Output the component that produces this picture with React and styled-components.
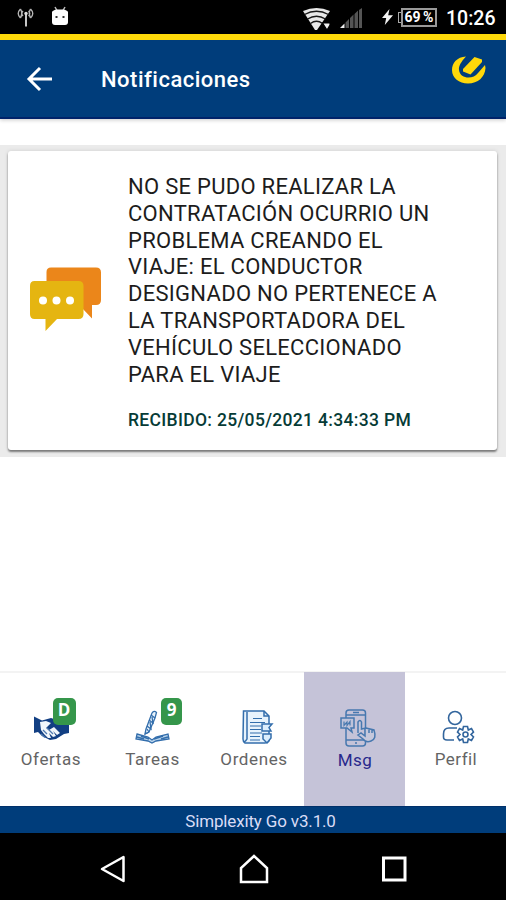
import React from "react";
import styled, { createGlobalStyle } from "styled-components";

const GlobalStyle = createGlobalStyle`
  *, *::before, *::after { box-sizing: border-box; }
  body { margin: 0; background: #fff; font-family: Roboto, "Liberation Sans", sans-serif; }
  svg { display: block; flex: none; overflow: visible; }
`;

const Screen = styled.div`
  display: flex;
  flex-direction: column;
  width: 506px;
  height: 900px;
  overflow: hidden;
  background: #fff;
`;

const StatusBar = styled.header`
  display: flex;
  justify-content: space-between;
  height: 34px;
  padding: 0 11px 0 17px;
  background: #000;
  color: #fff;
`;

const StatusGroup = styled.div`
  display: flex;
  align-items: flex-start;
`;

const StatusIcon = styled.svg`
  margin: ${(p) => p.$top}px ${(p) => p.$right}px 0 0;
`;

const Battery = styled.div`
  display: flex;
  align-items: center;
  margin: 8px 9px 0 0;
`;

const BatteryTip = styled.span`
  width: 3px;
  height: 11px;
  border: 1.5px solid #aaa;
  border-right: 0;
`;

const BatteryLevel = styled.span`
  width: 36px;
  height: 19px;
  border: 2px solid #999;
  font-size: 14px;
  font-weight: 700;
  line-height: 15px;
  text-align: center;
  white-space: nowrap;
  word-spacing: -1px;
`;

const Clock = styled.span`
  width: 49px;
  padding-top: 7px;
  font-size: 19.5px;
  font-weight: 500;
  line-height: 23px;
  white-space: nowrap;
`;

const AppBar = styled.div`
  display: flex;
  align-items: center;
  height: 85px;
  padding: 0 20px 0 26px;
  border-top: 6px solid #ffd90a;
  border-bottom: 2px solid #00236a;
  background: #003d7b;
  box-shadow: 0 1px 4px rgba(0, 0, 0, 0.22);
`;

const Title = styled.h1`
  flex: 1;
  margin: 2px 0 0 48px;
  color: #fff;
  font-size: 22px;
  font-weight: 500;
  letter-spacing: 0.5px;
  line-height: 28px;
`;

const BrandMark = styled.svg`
  align-self: flex-start;
  margin-top: 16px;
`;

const Feed = styled.main`
  margin-top: 26px;
  padding: 6px 9px 7px 8px;
  background: #ebebeb;
`;

const Card = styled.article`
  display: flex;
  height: 299px;
  padding: 23px 0 0 21px;
  border-radius: 3px;
  background: #fff;
  box-shadow: 0 2px 2px rgba(0, 0, 0, 0.45), 0 0 4px rgba(0, 0, 0, 0.12);
`;

const BubbleIcon = styled.svg`
  margin-top: 92px;
`;

const Message = styled.div`
  margin-left: 27px;
`;

const MessageText = styled.p`
  margin: 0;
  color: #1c1c1c;
  font-size: 22px;
  font-weight: 400;
  letter-spacing: 0.28px;
  line-height: 26.8px;
  white-space: nowrap;
`;

const Received = styled.p`
  margin: 21px 0 0;
  color: #063b36;
  font-size: 17.5px;
  font-weight: 500;
  letter-spacing: 0.32px;
  line-height: 22px;
  white-space: nowrap;
`;

const TabBar = styled.nav`
  display: grid;
  grid-template-columns: 101fr 102fr 101fr 101fr 101fr;
  height: 135px;
  margin-top: auto;
  border-top: 2px solid #f3f3f3;
`;

const Tab = styled.a`
  display: flex;
  flex-direction: column;
  align-items: center;
  padding-top: ${(p) => (p.$active ? 36 : 35)}px;
  margin-top: -1px;
  background: ${(p) => (p.$active ? "#c5c3d8" : "transparent")};
  color: ${(p) => (p.$active ? "#28288c" : "#646464")};
`;

const IconHolder = styled.div`
  position: relative;
  width: 40px;
  height: 40px;
`;

const TabLabel = styled.span`
  margin: 1px 0 0 1px;
  font-size: 17px;
  font-weight: 400;
  letter-spacing: ${(p) => p.$spacing}px;
  line-height: 22px;
`;

const Badge = styled.span`
  position: absolute;
  top: -9px;
  left: ${(p) => p.$left}px;
  width: ${(p) => p.$width}px;
  height: 27px;
  border-radius: 5px;
  background: #35964b;
  color: #fff;
  font: 700 17px/24px "Open Sans", "Noto Sans", sans-serif;
  text-align: center;
`;

const Version = styled.footer`
  height: 27px;
  padding-left: 15px;
  border-top: 1px solid #00306a;
  background: #003d7b;
  color: #d9dcf6;
  font-size: 17px;
  letter-spacing: -0.15px;
  line-height: 29px;
  text-align: center;
`;

const SystemBar = styled.div`
  display: flex;
  justify-content: space-between;
  align-items: center;
  height: 67px;
  padding: 4px 99px 0 99px;
  background: #000;
`;

const blue = "#336eac";

function Antenna() {
  return (
    <StatusIcon $top={8} $right={17} width="17" height="20" viewBox="0 0 17 20" fill="none" stroke="#b5b5b5" strokeWidth="1.4">
      <path d="M9 6V18.5" stroke="#ddd" strokeWidth="1.8" />
      <path d="M3.5 1Q-1 5.5 3.5 10M6 3Q3.5 5.5 6 8M13.5 1Q18 5.5 13.5 10M11.5 3Q14 5.5 11.5 8M3.5 1Q6 5 3.5 10M13.5 1Q11 5 13.5 10" />
      <circle cx="9" cy="5.5" r="1.7" fill="#ddd" stroke="none" />
    </StatusIcon>
  );
}

function Robot() {
  return (
    <StatusIcon $top={6} $right={0} width="18" height="20" viewBox="0 0 18 20">
      <path d="M4 1L6 4.5M14 1L12 4.5" stroke="#bbb" strokeWidth="1.5" />
      <path d="M1 6Q2 4 6 3.5H12Q16 4 17 6V16Q17 19 14 19H4Q1 19 1 16Z" fill="#fff" />
      <path d="M4.5 10h2v2h-2zM11.5 10h2v2h-2z" fill="#333" />
    </StatusIcon>
  );
}

function Wifi() {
  return (
    <StatusIcon $top={7} $right={9} width="29" height="24" viewBox="0 0 29 24" fill="none">
      <path d="M1 4Q14.5-2 28 4L15 23H13Z" fill="#e8e8e8" />
      <path d="M2.5 7.5Q14.5 1 26.5 7.5M5.5 12Q14.5 6.5 23.5 12M8.5 16.5Q14.5 12 20.5 16.5" stroke="#181818" strokeWidth="1.4" />
      <path d="M20.5 16H28V18L25 23Z" fill="#eee" stroke="#000" strokeWidth="1.2" />
    </StatusIcon>
  );
}

function Signal() {
  return (
    <StatusIcon $top={7} $right={19} width="23" height="22" viewBox="0 0 23 22">
      <path d="M0 21L4.5 16.5V21Z" fill="#eee" />
      <path d="M5.5 21V15.5L9 12V21ZM10 21V11L13.5 7.5V21ZM14.5 21V7L18 3.5V21ZM19 21V3L22 1V21Z" fill="#555" />
    </StatusIcon>
  );
}

function Bolt() {
  return (
    <StatusIcon $top={9} $right={5} width="11" height="16" viewBox="0 0 11 16">
      <path d="M7.5 0L0 9H4.2L2.8 16L11 6.2H6.2Z" fill="#f4f4f4" />
    </StatusIcon>
  );
}

function Bubbles() {
  return (
    <BubbleIcon width="72" height="68" viewBox="29 266 72 68">
      <path d="M51 267.5H96Q101 267.5 101 272.5V300Q101 305 96 305H92V318.5L82 308H51Q46.5 308 46.5 303V272Q46.5 267.5 51 267.5Z" fill="#eb861a" />
      <path d="M34.5 281H78.5Q83.5 281 83.5 286V314Q83.5 319 78.5 319H57L45.5 331V319H34.5Q30 319 30 314V286Q30 281 34.5 281Z" fill="#e5b511" />
      <circle cx="43" cy="300.5" r="4" fill="#fff" />
      <circle cx="56.5" cy="300.5" r="4" fill="#fff" />
      <circle cx="70" cy="300.5" r="4" fill="#fff" />
    </BubbleIcon>
  );
}

function Handshake() {
  return (
    <svg width="40" height="40" viewBox="31 706 40 40">
      <path d="M34 715.5L42 719.5L51 717L60 720L69 717V732L64 733L56 738L50 739L42 735L38 731L34 732Z" fill="#123f83" />
      <path d="M40 721L46 720L51 722L46 727L49 729L54 726L60 732L57 734L53 730L56 735L53 736L49 732L51 737L48 737L44 733L41 729Z" fill="#f2f7fb" />
      <path d="M43 729L47 733M47 727L53 733M41 733L45 736.5" stroke="#4f79ae" strokeWidth="1.3" fill="none" />
    </svg>
  );
}

function PenBook() {
  return (
    <svg width="40" height="40" viewBox="132 706 40 40" fill="none" stroke={blue} strokeWidth="1.3">
      <path d="M145 733L146 728L152 712Q154 709 156.5 711.5L155 717L149 731Z" fill="#e7f2fb" />
      <path d="M151 714L155 717M149 719L153 722L152 716M147 725L151 728L150 721M145 733L149 731M147 728L149 731" />
      <path d="M137 733L148 736L152 739L156 736L168 733L169 738L156 740L152 742L148 740L136 738Z" fill="#bcd6ed" />
      <path d="M141 735L149 738M163 735L154 738M137 736L144 738M168 736L161 738" strokeWidth="1.8" />
    </svg>
  );
}

function OrdersIcon() {
  return (
    <svg width="40" height="40" viewBox="234 707 40 40" fill="none" stroke={blue} strokeWidth="1.5">
      <path d="M243.5 711H264L269 716V741Q268 743 265 743H245Q243 742 243 739Z" fill="#e8f3fc" />
      <path d="M247 712V739Q246 741 244 742M264 711V716H269" />
      <path d="M253 718.5H262M250 722.5H265M250 726H261M250 729.5H261M250 733H262M250 736.5H260M250 740H260" strokeWidth="1.2" />
      <path d="M262 725V724H272L269 727.5L271 731H262ZM263 734H271V738L267 743L263 739Z" fill="#dceefd" />
    </svg>
  );
}

function MessageIcon() {
  return (
    <svg width="40" height="40" viewBox="335 707 40 40" fill="none" stroke="#4778af" strokeWidth="1.5">
      <rect x="346" y="709" width="19.5" height="36" rx="3" />
      <path d="M346 714H365M346 739H365M353 711.5H359M355 742H357" />
      <path d="M341 717H354V727H351L352 731L347 727H341Z" fill="#bfc3da" />
      <path d="M344 720.5V724.5L347 721V724.5L350 720.5V724.5" strokeWidth="1.2" />
      <path d="M358 732V721Q360 718 361.5 721V728L366 727L374 729Q377 738 371 740Q366 742 363 738L358 734L361 732L365 735V728M369 728V732M372 729V732" fill="#c5c8dc" />
    </svg>
  );
}

function ProfileIcon() {
  return (
    <svg width="40" height="40" viewBox="436 707 40 40" fill="none" stroke="#32659d" strokeWidth="1.6">
      <circle cx="455" cy="718" r="6.5" />
      <path d="M457 728H449Q443.5 728 443.5 734V737Q443.5 740 447 740H454" />
      <path d="M463.5 726.5H467.5L468.3 730L471.5 728.5L473.5 732L471 734.5L473.5 737L471.5 740.5L468.3 739L467.5 742.5H463.5L462.7 739L459.5 740.5L457.5 737L460 734.5L457.5 732L459.5 728.5L462.7 730Z" />
      <circle cx="465.5" cy="734.5" r="2.5" />
    </svg>
  );
}

const tabs = [
  { label: "Ofertas", Icon: Handshake, spacing: 0.6, badge: { text: "D", left: 22, width: 23 } },
  { label: "Tareas", Icon: PenBook, spacing: 0.6, badge: { text: "9", left: 29, width: 21 } },
  { label: "Ordenes", Icon: OrdersIcon, spacing: 0.6 },
  { label: "Msg", Icon: MessageIcon, spacing: 0.5, active: true },
  { label: "Perfil", Icon: ProfileIcon, spacing: 0.45 },
];

const messageLines = [
  "NO SE PUDO REALIZAR LA",
  "CONTRATACIÓN OCURRIO UN",
  "PROBLEMA CREANDO EL",
  "VIAJE: EL CONDUCTOR",
  "DESIGNADO NO PERTENECE A",
  "LA TRANSPORTADORA DEL",
  "VEHÍCULO SELECCIONADO",
  "PARA EL VIAJE",
];

export default function App() {
  return (
    <Screen>
      <GlobalStyle />
      <StatusBar>
        <StatusGroup>
          <Antenna />
          <Robot />
        </StatusGroup>
        <StatusGroup>
          <Wifi />
          <Signal />
          <Bolt />
          <Battery>
            <BatteryTip />
            <BatteryLevel>69 %</BatteryLevel>
          </Battery>
          <Clock>10:26</Clock>
        </StatusGroup>
      </StatusBar>
      <AppBar>
        <svg width="27" height="24" viewBox="0 0 27 24" fill="none" stroke="#fff" strokeWidth="3">
          <path d="M26 12H3M14 1L3 12L14 23" />
        </svg>
        <Title>Notificaciones</Title>
        <BrandMark width="34" height="28" viewBox="452 56 34 28">
          <path d="M466 56.5C457 57 452 63 452 70C452 78 459 83.5 468 83.5C478 83.5 485 77 485.5 68L485 65L478 73C473 80 460 79 459 70C458.5 66 461 62 466 56.5Z" fill="#ffd80a" />
          <path d="M474.5 57L482 59.5L482 62L470.5 74.5L463 71.5V69Z" fill="#ffd80a" />
        </BrandMark>
      </AppBar>
      <Feed>
        <Card>
          <Bubbles />
          <Message>
            <MessageText>
              {messageLines.map((line) => (
                <React.Fragment key={line}>
                  {line}
                  <br />
                </React.Fragment>
              ))}
            </MessageText>
            <Received>RECIBIDO: 25/05/2021 4:34:33 PM</Received>
          </Message>
        </Card>
      </Feed>
      <TabBar>
        {tabs.map(({ label, Icon, spacing, badge, active }) => (
          <Tab key={label} $active={active}>
            <IconHolder>
              <Icon />
              {badge && (
                <Badge $left={badge.left} $width={badge.width}>
                  {badge.text}
                </Badge>
              )}
            </IconHolder>
            <TabLabel $spacing={spacing}>{label}</TabLabel>
          </Tab>
        ))}
      </TabBar>
      <Version>Simplexity Go v3.1.0</Version>
      <SystemBar>
        <svg width="27" height="28" viewBox="0 0 27 28" fill="none" stroke="#fff" strokeWidth="2.5">
          <path d="M24.5 2V26L3 14Z" strokeLinejoin="round" />
        </svg>
        <svg width="30" height="30" viewBox="0 0 30 30" fill="none" stroke="#fff" strokeWidth="2.5">
          <path d="M2 28V14L15 2L28 14V28Z" />
        </svg>
        <svg width="26" height="26" viewBox="0 0 26 26" fill="none" stroke="#fff" strokeWidth="3">
          <rect x="2.5" y="2" width="21.5" height="22" />
        </svg>
      </SystemBar>
    </Screen>
  );
}
